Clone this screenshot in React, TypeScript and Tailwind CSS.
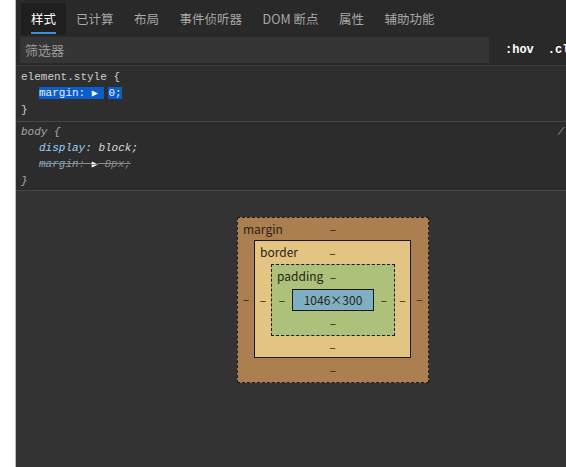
import { ReactNode } from 'react';

const tabs = ['样式', '已计算', '布局', '事件侦听器', 'DOM 断点', '属性', '辅助功能'];

function Dash({ className = '' }: { className?: string }) {
  return <span className={`leading-none ${className}`}>–</span>;
}

function Box({
  label,
  className,
  cols,
  rows,
  children,
}: {
  label: string;
  className: string;
  cols: string;
  rows: string;
  children: ReactNode;
}) {
  return (
    <div className={`grid ${cols} ${rows} ${className}`}>
      <div className="relative col-span-3 flex items-center justify-center">
        <span className="absolute left-[5px] top-[5px] leading-none">{label}</span>
        <Dash />
      </div>
      <div className="flex items-center justify-center">
        <Dash />
      </div>
      {children}
      <div className="flex items-center justify-center">
        <Dash />
      </div>
      <div className="col-span-3 flex items-center justify-center">
        <Dash />
      </div>
    </div>
  );
}

export default function App() {
  return (
    <div className="flex h-[467px] w-[566px] overflow-hidden bg-white font-['Noto_Sans_CJK_SC','Noto_Sans',sans-serif]">
      <div className="w-[16px] shrink-0 border-r border-[#b9b9b9] bg-white" />
      <div className="flex min-w-0 flex-1 flex-col bg-[#333333]">
        {/* tabs */}
        <div className="flex h-[35px] shrink-0 items-end bg-[#292929] pl-[5px] text-[12.5px] text-[#a8a8a8]">
          {tabs.map((t, i) => (
            <div
              key={t}
              className={`relative flex h-[32px] shrink-0 items-center whitespace-nowrap px-[10px] ${
                i === 0 ? 'bg-[#1f1f1f] text-white' : ''
              } ${i > 1 ? 'ml-[0.5px]' : ''}`}
            >
              {t}
              {i === 0 && (
                <span className="absolute bottom-[1px] left-[10px] right-[10px] h-[2px] bg-[#3b8fe0]" />
              )}
            </div>
          ))}
        </div>

        {/* filter */}
        <div className="flex h-[31px] shrink-0 items-center overflow-hidden border-b border-[#3c3c3c] bg-[#292929] pl-[4px]">
          <div className="flex h-[26px] w-[469px] shrink-0 items-center bg-[#353535] px-[5px] text-[13px] text-[#9a9a9a]">
            筛选器
          </div>
          <div className="ml-[16px] flex shrink-0 gap-[14px] whitespace-nowrap font-['Liberation_Mono',monospace] text-[12px] font-bold text-white">
            <span>:hov</span>
            <span>.cls</span>
          </div>
        </div>

        {/* element.style */}
        <div className="shrink-0 border-b border-[#454545] bg-[#2e2e2e] py-[3px] pl-[5px] font-['Liberation_Mono',monospace] text-[11px] leading-[16px] text-[#cfcfcf]">
          <div>element.style {'{'}</div>
          <div className="pl-[18px]">
            <span className="bg-[#0b5ccc] text-[#e8f1ff]">
              margin: <span className="text-[10px] text-white">▶</span>{' '}
            </span>
            <span className="ml-[4px] bg-[#0b5ccc] text-[#e8f1ff]">0;</span>
          </div>
          <div>{'}'}</div>
        </div>

        {/* body */}
        <div className="relative shrink-0 border-b border-[#454545] bg-[#2c2c2c] pb-[1px] pt-[2px] pl-[5px] font-['Liberation_Mono',monospace] text-[11px] italic leading-[16px] text-[#a9a9a9]">
          <span className="absolute right-[2px] top-[2px] text-[#8a8a8a]">/</span>
          <div>body {'{'}</div>
          <div className="pl-[18px]">
            <span className="text-[#9bd0f5]">display</span>
            <span className="text-[#dcdcdc]">: block;</span>
          </div>
          <div className="pl-[18px] text-[#8a8a8a] line-through">
            <span className="text-[#7fa7c4]">margin</span>: <span className="text-[10px] not-italic text-white">▶</span> 8px;
          </div>
          <div>{'}'}</div>
        </div>

        {/* box model */}
        <div className="flex flex-1 bg-[#333333] pl-[221px] pt-[26px] text-[12px] text-[#2a1f12]">
          <div className="self-start">
            <Box
              label="margin"
              className="h-[166px] w-[192px] border border-dashed border-[#1a1a1a] bg-[#ac7f50]"
              cols="grid-cols-[16px_1fr_17px]"
              rows="grid-rows-[22px_1fr_24px]"
            >
              <Box
                label="border"
                className="border border-[#1a1a1a] bg-[#e4c482]"
                cols="grid-cols-[16px_1fr_15px]"
                rows="grid-rows-[23px_1fr_21px]"
              >
                <Box
                  label="padding"
                  className="border border-dashed border-[#1a1a1a] bg-[#adc17b]"
                  cols="grid-cols-[20px_1fr_20px]"
                  rows="grid-rows-[24px_1fr_24px]"
                >
                  <div className="flex h-[22px] items-center justify-center border border-[#1a1a1a] bg-[#80afc3] text-[12px]">
                    1046×300
                  </div>
                </Box>
              </Box>
            </Box>
          </div>
        </div>
      </div>
    </div>
  );
}
